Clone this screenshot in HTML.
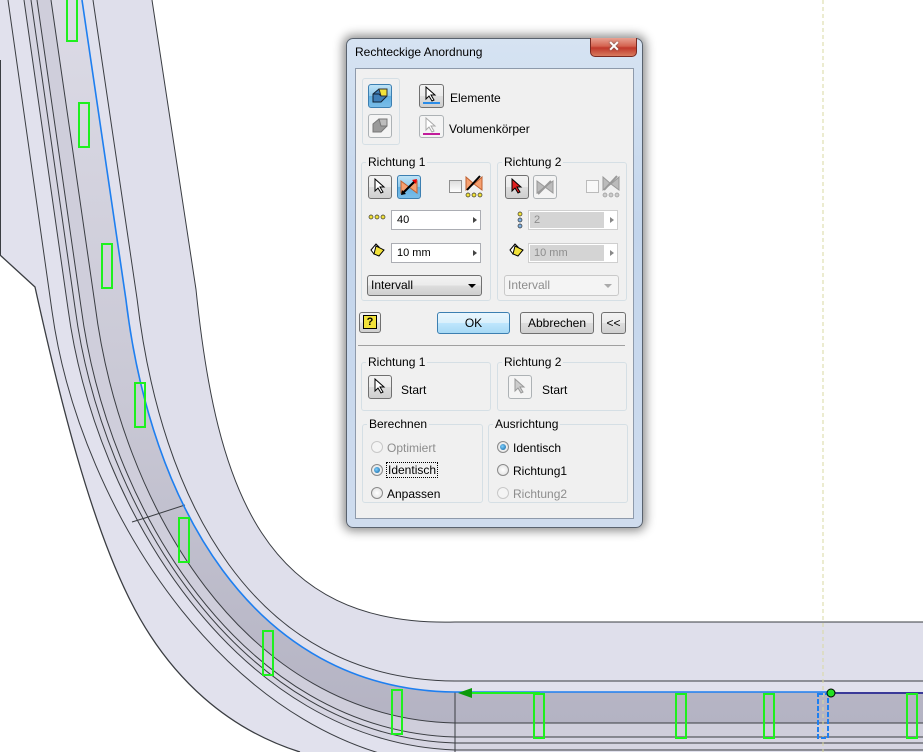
<!DOCTYPE html>
<html><head><meta charset="utf-8">
<style>
*{margin:0;padding:0;box-sizing:border-box}
body{width:923px;height:752px;overflow:hidden;background:#fff;position:relative;font-family:"Liberation Sans",sans-serif;font-size:12px;color:#000}
#bg{position:absolute;left:0;top:0}
.a{position:absolute}
.win{left:346px;top:38px;width:297px;height:490px;border-radius:7px;background:linear-gradient(#d6e3f2,#c3d5ec 40%,#cfdcee);border:1px solid #59626e;box-shadow:0 0 10px 3px rgba(0,0,0,.45)}
.panel{left:355px;top:68px;width:279px;height:451px;background:#f0f0f0;border:1px solid #8e9aab}
.grp{position:absolute;border:1px solid #d5dfe5;border-radius:3px}
.lbl{position:absolute;background:#f0f0f0;padding:0 2px;line-height:13px}
.btn{position:absolute;border:1px solid #707070;border-radius:3px;background:linear-gradient(#f2f2f2,#ebebeb 50%,#dddddd 51%,#cfcfcf)}
.btn.dis{border-color:#adb2b5;background:#f4f4f4}
.btn.sel{border-color:#3c7fb1;background:linear-gradient(#bfe3f7,#8cc8ec 50%,#62b0e2 51%,#79bde8)}
.inp{position:absolute;border:1px solid #abadb3;background:#fff;height:20px;line-height:18px;padding-left:5px;font-size:11px}
.inp.dis{background:#fff;color:#8d8d8d;border-color:#cfcfcf}
.inp.dis span.f{position:absolute;left:1px;top:1px;right:13px;bottom:1px;background:#d4d4d4}
.inp .t{position:relative}
.arr{position:absolute;right:3px;top:6px;width:0;height:0;border-left:4px solid #444;border-top:3px solid transparent;border-bottom:3px solid transparent}
.rad{position:absolute;width:12px;height:12px;border-radius:50%;border:1px solid #8a8a8a;background:radial-gradient(#fff,#ddd)}
.rad.on::after{content:"";position:absolute;left:2px;top:2px;width:6px;height:6px;border-radius:50%;background:radial-gradient(circle at 40% 40%,#7fd0ff,#0b5e9a)}
.rad.dis{border-color:#c8c8c8;background:#f4f4f4}
.chk{position:absolute;width:13px;height:13px;border:1px solid #8f8f8f;background:linear-gradient(#ddd,#fff)}
.g{color:#8d8d8d}
</style></head><body>
<svg id="bg" width="923" height="752" viewBox="0 0 923 752">
<defs>
<linearGradient id="band" x1="0" y1="0" x2="0" y2="1">
<stop offset="0" stop-color="#dcdbe6"/><stop offset="0.55" stop-color="#c9c8d5"/><stop offset="1" stop-color="#b4b3c3"/>
</linearGradient>
</defs>
<path d="M0,0 L0,255 L35,287 C60,400 90,520 130,600 C170,680 230,730 300,752 L923,752 L923,0 Z" fill="#e1e1ed"/>
<g id="gen"></g>
</svg>

<div class="a win"></div>
<div class="a" style="left:355px;top:45px;font-size:12px;color:#000">Rechteckige Anordnung</div>
<div class="a" style="left:590px;top:38px;width:47px;height:19px;border:1px solid #7a2a22;border-top:none;border-radius:0 0 5px 5px;background:linear-gradient(#e8a293,#d46450 45%,#c0392b 55%,#d87a5e)"></div>
<div class="a" style="left:606px;top:38px;width:16px;height:17px;color:#fff;font-weight:bold;font-size:14px;text-align:center;line-height:17px;text-shadow:0 0 2px #555">✕</div>
<div class="a panel"></div>

<div class="grp" style="left:362px;top:78px;width:38px;height:67px"></div>
<div class="btn sel" style="left:368px;top:84px;width:24px;height:24px"></div>
<svg class="a" style="left:370px;top:86px" width="20" height="20"><path d="M3,8 L9,3 L17,3 L17,10 L11,16 L3,16 Z" fill="#3f7fb8" stroke="#123" stroke-width="1"/><path d="M9,3 L17,3 L17,10 L11,10 Z" fill="#f2e23a" stroke="#333"/><path d="M3,8 L9,8 L11,10" fill="none" stroke="#123"/></svg>
<div class="btn dis" style="left:368px;top:114px;width:24px;height:24px"></div>
<svg class="a" style="left:370px;top:116px" width="20" height="20"><path d="M3,8 L9,3 L17,3 L17,10 L11,16 L3,16 Z" fill="#9a9a9a" stroke="#777"/><path d="M9,3 L17,3 L17,10 L11,10 Z" fill="#bdbdbd" stroke="#777"/></svg>
<div class="btn" style="left:419px;top:84px;width:25px;height:24px"></div>
<div class="a" style="left:423px;top:102px;width:17px;height:2px;background:#2a8ce8"></div>
<svg class="a" style="left:424px;top:86px" width="14" height="16"><path d="M2,1 L2,13 L5,10 L8,15 L10,14 L7,9 L11,9 Z" fill="#fff" stroke="#000"/></svg>
<div class="btn dis" style="left:419px;top:115px;width:25px;height:23px"></div>
<div class="a" style="left:423px;top:133px;width:17px;height:2px;background:#c21d9b"></div>
<svg class="a" style="left:424px;top:117px" width="14" height="16"><path d="M2,1 L2,13 L5,10 L8,15 L10,14 L7,9 L11,9 Z" fill="#fff" stroke="#aaa"/></svg>
<div class="a" style="left:450px;top:91px">Elemente</div>
<div class="a" style="left:449px;top:122px">Volumenkörper</div>

<div class="grp" style="left:361px;top:162px;width:130px;height:139px"></div>
<div class="lbl" style="left:366px;top:156px">Richtung 1</div>
<div class="btn" style="left:368px;top:175px;width:24px;height:24px"></div>
<svg class="a" style="left:373px;top:178px" width="14" height="16"><path d="M2,1 L2,13 L5,10 L8,15 L10,14 L7,9 L11,9 Z" fill="#fff" stroke="#000"/></svg>
<div class="btn sel" style="left:397px;top:175px;width:24px;height:24px"></div>
<svg class="a" style="left:399px;top:177px" width="20" height="20"><path d="M2,4 L10,10 L2,16 Z M18,4 L10,10 L18,16 Z" fill="#f6a070" stroke="#c06030"/><path d="M3,17 L16,4" stroke="#000" stroke-width="2"/><path d="M13,3 L18,2 L17,7 Z" fill="#e00"/><path d="M2,18 L3,13 L7,17Z" fill="#000"/></svg>
<div class="chk" style="left:449px;top:180px"></div>
<svg class="a" style="left:465px;top:174px" width="18" height="24"><path d="M1,3 L9,10 L1,16 Z M17,3 L9,10 L17,16 Z" fill="#f6a070" stroke="#c06030"/><path d="M2,16 L15,2" stroke="#000" stroke-width="2"/><circle cx="3" cy="21" r="2" fill="#f2e23a" stroke="#333" stroke-width=".7"/><circle cx="9" cy="21" r="2" fill="#f2e23a" stroke="#333" stroke-width=".7"/><circle cx="15" cy="21" r="2" fill="#f2e23a" stroke="#333" stroke-width=".7"/></svg>
<svg class="a" style="left:368px;top:213px" width="18" height="8"><circle cx="3" cy="4" r="2" fill="#f2e23a" stroke="#333" stroke-width=".7"/><circle cx="9" cy="4" r="2" fill="#f2e23a" stroke="#333" stroke-width=".7"/><circle cx="15" cy="4" r="2" fill="#f2e23a" stroke="#333" stroke-width=".7"/></svg>
<div class="inp" style="left:391px;top:210px;width:90px"><span class="t">40</span><div class="arr"></div></div>
<svg class="a" style="left:370px;top:242px" width="16" height="16"><path d="M1,8 L6,2 L9,5 L4,12 Z" fill="#fff" stroke="#000"/><path d="M6,4 L14,8 L9,14 L4,12 Z" fill="#f2e23a" stroke="#000"/></svg>
<div class="inp" style="left:391px;top:243px;width:90px"><span class="t">10 mm</span><div class="arr"></div></div>
<div class="btn" style="left:367px;top:275px;width:115px;height:21px;padding-left:3px;line-height:19px">Intervall</div>
<div class="a" style="left:468px;top:284px;border-top:4px solid #000;border-left:4px solid transparent;border-right:4px solid transparent"></div>

<div class="grp" style="left:497px;top:162px;width:130px;height:139px"></div>
<div class="lbl" style="left:502px;top:156px">Richtung 2</div>
<div class="btn" style="left:505px;top:175px;width:24px;height:24px"></div>
<svg class="a" style="left:510px;top:178px" width="14" height="16"><path d="M2,1 L2,13 L5,10 L8,15 L10,14 L7,9 L11,9 Z" fill="#e02020" stroke="#000"/></svg>
<div class="btn dis" style="left:533px;top:175px;width:24px;height:24px"></div>
<svg class="a" style="left:535px;top:177px" width="20" height="20"><path d="M2,4 L10,10 L2,16 Z M18,4 L10,10 L18,16 Z" fill="#bbb" stroke="#999"/><path d="M3,17 L16,4" stroke="#999" stroke-width="2"/></svg>
<div class="chk" style="left:586px;top:180px;border-color:#bbb;background:#f8f8f8"></div>
<svg class="a" style="left:602px;top:174px" width="18" height="24"><path d="M1,3 L9,10 L1,16 Z M17,3 L9,10 L17,16 Z" fill="#bbb" stroke="#999"/><path d="M2,16 L15,2" stroke="#999" stroke-width="2"/><circle cx="3" cy="21" r="2" fill="#ccc" stroke="#999" stroke-width=".7"/><circle cx="9" cy="21" r="2" fill="#ccc" stroke="#999" stroke-width=".7"/><circle cx="15" cy="21" r="2" fill="#ccc" stroke="#999" stroke-width=".7"/></svg>
<svg class="a" style="left:516px;top:210px" width="8" height="20"><circle cx="4" cy="4" r="2" fill="#f2e23a" stroke="#333" stroke-width=".7"/><circle cx="4" cy="10" r="2" fill="#7fb0e0" stroke="#333" stroke-width=".7"/><circle cx="4" cy="16" r="2" fill="#7fb0e0" stroke="#333" stroke-width=".7"/></svg>
<div class="inp dis" style="left:528px;top:210px;width:90px"><span class="f"></span><span class="t">2</span><div class="arr" style="border-left-color:#888"></div></div>
<svg class="a" style="left:509px;top:242px" width="16" height="16"><path d="M1,8 L6,2 L9,5 L4,12 Z" fill="#fff" stroke="#000"/><path d="M6,4 L14,8 L9,14 L4,12 Z" fill="#f2e23a" stroke="#000"/></svg>
<div class="inp dis" style="left:528px;top:243px;width:90px"><span class="f"></span><span class="t">10 mm</span><div class="arr" style="border-left-color:#888"></div></div>
<div class="a" style="left:504px;top:275px;width:115px;height:21px;border:1px solid #c9c9c9;border-radius:3px;background:#f4f4f4;padding-left:3px;line-height:19px;color:#8d8d8d">Intervall</div>
<div class="a" style="left:604px;top:284px;border-top:4px solid #aaa;border-left:4px solid transparent;border-right:4px solid transparent"></div>

<div class="btn" style="left:359px;top:312px;width:22px;height:21px"></div>
<div class="a" style="left:363px;top:315px;width:14px;height:14px;border:1px solid #000;background:#f2e23a;font-weight:bold;font-size:11px;line-height:12px;text-align:center">?</div>
<div class="btn" style="left:437px;top:312px;width:73px;height:22px;border-color:#3c7fb1;background:linear-gradient(#eaf6fd,#d9f0fc 50%,#bee6fd 51%,#a7d9f5);text-align:center;line-height:20px">OK</div>
<div class="btn" style="left:520px;top:312px;width:74px;height:22px;text-align:center;line-height:20px">Abbrechen</div>
<div class="btn" style="left:601px;top:312px;width:25px;height:22px;text-align:center;line-height:20px">&lt;&lt;</div>
<div class="a" style="left:358px;top:345px;width:267px;height:1px;background:#a0a0a0"></div>

<div class="grp" style="left:361px;top:362px;width:130px;height:49px"></div>
<div class="lbl" style="left:366px;top:356px">Richtung 1</div>
<div class="btn" style="left:368px;top:375px;width:24px;height:24px"></div>
<svg class="a" style="left:373px;top:378px" width="14" height="16"><path d="M2,1 L2,13 L5,10 L8,15 L10,14 L7,9 L11,9 Z" fill="#fff" stroke="#000"/></svg>
<div class="a" style="left:401px;top:383px">Start</div>
<div class="grp" style="left:497px;top:362px;width:130px;height:49px"></div>
<div class="lbl" style="left:502px;top:356px">Richtung 2</div>
<div class="btn dis" style="left:508px;top:375px;width:24px;height:24px"></div>
<svg class="a" style="left:513px;top:378px" width="14" height="16"><path d="M2,1 L2,13 L5,10 L8,15 L10,14 L7,9 L11,9 Z" fill="#ccc" stroke="#999"/></svg>
<div class="a" style="left:542px;top:383px">Start</div>

<div class="grp" style="left:362px;top:424px;width:121px;height:79px"></div>
<div class="lbl" style="left:367px;top:418px">Berechnen</div>
<div class="rad dis" style="left:371px;top:441px"></div><div class="a g" style="left:387px;top:441px">Optimiert</div>
<div class="rad on" style="left:371px;top:464px"></div><div class="a" style="left:386px;top:462px;border:1px dotted #000;padding:0 1px;line-height:14px">Identisch</div>
<div class="rad" style="left:371px;top:487px"></div><div class="a" style="left:387px;top:487px">Anpassen</div>
<div class="grp" style="left:488px;top:424px;width:140px;height:79px"></div>
<div class="lbl" style="left:493px;top:418px">Ausrichtung</div>
<div class="rad on" style="left:497px;top:441px"></div><div class="a" style="left:513px;top:441px">Identisch</div>
<div class="rad" style="left:497px;top:464px"></div><div class="a" style="left:513px;top:464px">Richtung1</div>
<div class="rad dis" style="left:497px;top:487px"></div><div class="a g" style="left:513px;top:487px">Richtung2</div>

<script>
(function(){
// anchors: P0 top, P1 start of bend, c1,c2, P2 end of bend
function pts(d){
 var k=1-d/400; // control scaling approximated
 return {
  p0:[82-d,0],
  p1:[126-d,300+0.15*d],
  c1:[150-d*0.95,500+0.15*d],
  c2:[250-d*0.2,690+d*0.9],
  p2:[455,692+d]
 };
}
function f(p){return p[0].toFixed(1)+","+p[1].toFixed(1);}
function path(d,end){var p=pts(d);
 return "M"+f(p.p0)+" L"+f(p.p1)+" C"+f(p.c1)+" "+f(p.c2)+" "+f(p.p2)+" L"+(end||923)+","+(692+d);}
function rev(d){var p=pts(d);
 return "L923,"+(692+d)+" L"+f(p.p2)+" C"+f(p.c2)+" "+f(p.c1)+" "+f(p.p1)+" L"+f(p.p0)+" Z";}
var g=document.getElementById("gen"),h="";
h+='<path d="'+path(-70)+' L923,0 Z" fill="#ffffff"/>';
h+='<path d="'+path(-70)+' '+rev(-11)+'" fill="#dfdfeb"/>';
h+='<path d="'+path(0)+' '+rev(31)+'" fill="url(#band)"/>';
h+='<path d="'+path(31)+' '+rev(45)+'" fill="#cfcedb"/>';
h+='<path d="'+path(45)+' '+rev(58)+'" fill="#d6d5e2"/>';
h+='<path d="M0,255 L35,287 C60,400 90,520 130,600 C170,680 230,730 300,752 L0,752 Z" fill="#ffffff"/>';
var ls=[-70,-11,31,45,51,58,74];
for(var i=0;i<ls.length;i++)h+='<path d="'+path(ls[i])+'" fill="none" stroke="#3a3d42" stroke-width="1"/>';
h+='<path d="M0,255 L35,287 C60,400 90,520 130,600 C170,680 230,730 300,752" fill="none" stroke="#3a3d42" stroke-width="1.3"/>';
h+='<path d="M0,60 L0,255" stroke="#3a3d42" stroke-width="2"/>';
h+='<path d="M132,522 L145,518 L185,505" fill="none" stroke="#3a3d42"/>';
h+='<path d="M455,692 L455,752" stroke="#3a3d42"/>';
h+='<path d="'+path(0,830)+'" fill="none" stroke="#1e7ff0" stroke-width="1.6"/>';
h+='<path d="M830,693 L923,693" stroke="#10108a" stroke-width="1.6"/>';
h+='<path d="M823,0 L823,752" stroke="#d8d8a0" stroke-width="1" stroke-dasharray="4,3"/>';
var R=[[67,-3],[79,103],[102,244],[135,383],[179,518],[263,631],[392,690],[534,694],[676,694],[764,694],[907,694]];
for(i=0;i<R.length;i++)h+='<rect x="'+R[i][0]+'" y="'+R[i][1]+'" width="10" height="44" fill="none" stroke="#1ef01e" stroke-width="2"/>';
h+='<rect x="818" y="694" width="10" height="44" fill="none" stroke="#1e7ff0" stroke-width="2" stroke-dasharray="5,2"/>';
h+='<path d="M470,693 L540,693" stroke="#1ef01e" stroke-width="2"/><path d="M458,693 L472,688 L472,698 Z" fill="#0a9a0a"/>';
h+='<circle cx="831" cy="693" r="4" fill="#22e022" stroke="#000"/>';
g.innerHTML=h;
})();
</script>
</body></html>
